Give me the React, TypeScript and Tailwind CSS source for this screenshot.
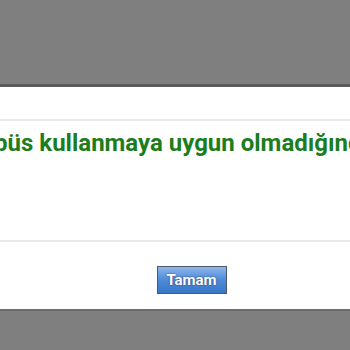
export default function App() {
	return (
		<div
			className="flex h-[350px] w-[350px] flex-col overflow-hidden bg-[#7f7f7f]"
			style={{ fontFamily: "Roboto, 'Liberation Sans', sans-serif" }}
		>
			<div className="h-[84px] shrink-0 bg-[#7f7f7f]" />
			<div className="h-[3px] shrink-0 bg-[#5a5a5a]" />
			<div className="flex h-[222px] shrink-0 flex-col bg-white">
				<div className="h-[34px] shrink-0 border-b-2 border-[#e8e8e8]" />
				<div className="flex h-[121px] shrink-0 justify-center border-b-2 border-[#e8e8e8] pr-[6px] pt-[6px]">
					<p className="whitespace-nowrap text-[24px] font-bold leading-[32px] text-[#1b7d1b]">
						Otobüs kullanmaya uygun olmadığından
					</p>
				</div>
				<div className="flex flex-1 items-start justify-center pt-[24px]">
					<button className="ml-[33px] h-[28px] w-[70px] border border-[#4c5966] bg-gradient-to-b from-[#8fb6ea] via-[#4d8ad7] to-[#3a76c6] text-[15px] font-bold text-white [text-shadow:0_0_2px_rgba(0,0,60,0.6)]">
						Tamam
					</button>
				</div>
			</div>
			<div className="h-[2px] shrink-0 bg-[#6c6c6c]" />
		</div>
	);
}
